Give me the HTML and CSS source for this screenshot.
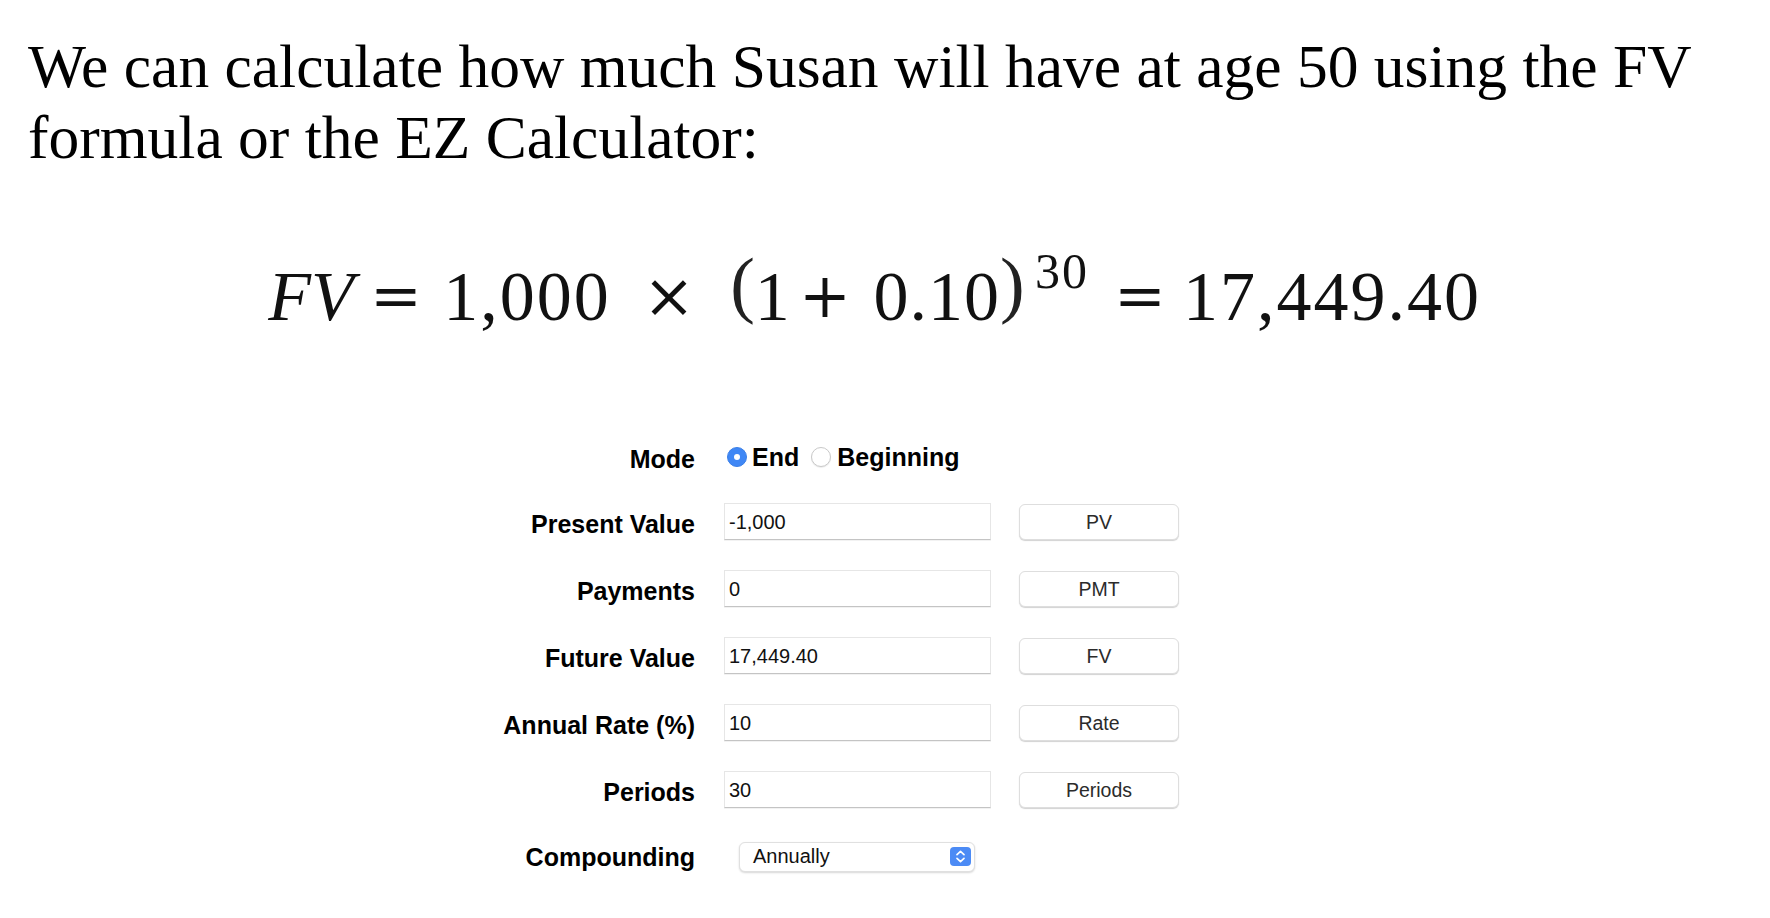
FILE: index.html
```html
<!DOCTYPE html>
<html lang="en">
<head>
<meta charset="utf-8">
<title>FV calculation</title>
<link rel="stylesheet" href="styles.css">
</head>
<body>
<p class="intro">We can calculate how much Susan will have at age 50 using the FV formula or the EZ Calculator:</p>

<div class="formula"><span class="term var"><span>FV</span></span><span class="term op eq1"><span>=</span></span><span class="term num n1"><span>1,000</span></span><span class="term op times"><span>×</span></span><span class="term open"><span><span class="paren">(</span><span class="num">1</span></span></span><span class="term op plus"><span>+</span></span><span class="term close"><span><span class="num tight">0.10</span><span class="paren">)</span></span></span><span class="term sup"><span>30</span></span><span class="term op eq2"><span>=</span></span><span class="term num result"><span>17,449.40</span></span></div>

<div class="calc">
  <div class="label mode">Mode</div>
  <div class="radios mode">
    <span class="radio on"></span><span class="rlabel">End</span>
    <span class="radio off"></span><span class="rlabel">Beginning</span>
  </div>

  <div class="label">Present Value</div>
  <input class="field" type="text" value="-1,000">
  <button class="btn" type="button">PV</button>

  <div class="label">Payments</div>
  <input class="field" type="text" value="0">
  <button class="btn" type="button">PMT</button>

  <div class="label">Future Value</div>
  <input class="field" type="text" value="17,449.40">
  <button class="btn" type="button">FV</button>

  <div class="label">Annual Rate (%)</div>
  <input class="field" type="text" value="10">
  <button class="btn" type="button">Rate</button>

  <div class="label">Periods</div>
  <input class="field" type="text" value="30">
  <button class="btn" type="button">Periods</button>

  <div class="label comp">Compounding</div>
  <div class="select">
    <span class="select-text">Annually</span>
    <svg class="stepper" width="21" height="19" viewBox="0 0 21 19" aria-hidden="true">
      <rect x="0" y="0" width="21" height="19" rx="4" fill="#4c8bf5"/>
      <path d="M7 7.6 L10.5 4.4 L14 7.6" fill="none" stroke="#fff" stroke-width="1.7" stroke-linecap="round" stroke-linejoin="round"/>
      <path d="M7 11.4 L10.5 14.6 L14 11.4" fill="none" stroke="#fff" stroke-width="1.7" stroke-linecap="round" stroke-linejoin="round"/>
    </svg>
  </div>
</div>
</body>
</html>
```

FILE: styles.css
```css
html, body {
  margin: 0;
  padding: 0;
  background: #ffffff;
  color: #000000;
}

.intro {
  margin: 31px 0 0 0;
  padding-left: 28px;
  font-family: "Liberation Serif", "Times New Roman", serif;
  font-size: 61.5px;
  line-height: 71px;
}

/* Each term is a zero-width box centred on its own position along the line */
.formula {
  margin-top: 73px;
  padding-left: 311px;
  height: 100px;
  line-height: 100px;
  white-space: nowrap;
  font-family: "Liberation Serif", "Times New Roman", serif;
  font-size: 70px;
  color: #111;
}

.term {
  display: inline-flex;
  justify-content: center;
  width: 0;
  line-height: 1;
}

.term > span {
  display: block;
  flex: none;
}

.var {
  font-style: italic;
}

.num {
  letter-spacing: 2px;
}

.num.tight {
  letter-spacing: 1px;
}

.op {
  font-family: "DejaVu Serif", "Liberation Serif", serif;
  font-size: 62px;
  vertical-align: 3px;
}

.eq1 { margin-left: 85px; }
.n1 { margin-left: 131px; }
.times { margin-left: 142px; }
.open { margin-left: 92px; }
.plus { margin-left: 64px; }
.close { margin-left: 124px; }
.sup { margin-left: 113px; }
.eq2 { margin-left: 78px; }
.result { margin-left: 192px; }

.paren {
  font-size: 74px;
  letter-spacing: 0;
  vertical-align: 11px;
  color: #222;
}

.formula .sup {
  font-size: 50px;
  letter-spacing: 2px;
  vertical-align: 32px;
}

.calc {
  display: grid;
  grid-template-columns: 695px 267px 160px;
  column-gap: 29px;
  grid-auto-rows: 67px;
  align-items: center;
  margin-top: 75px;
  font-family: "Liberation Sans", Arial, Helvetica, sans-serif;
}

.label {
  text-align: right;
  font-weight: bold;
  font-size: 25px;
  line-height: 30px;
  padding-top: 4px;
}

.mode {
  margin-top: 5px;
}

.label.comp {
  padding-top: 0;
}

.radios {
  grid-column: 2 / 4;
  display: flex;
  align-items: center;
  padding-left: 3px;
  font-weight: bold;
  font-size: 25px;
  line-height: 30px;
}

.radio {
  width: 20px;
  height: 20px;
  border-radius: 50%;
  box-sizing: border-box;
  flex: none;
}

.radio.on {
  background: #3f87f5;
  border: 1px solid #3a7fe8;
  position: relative;
}

.radio.on::after {
  content: "";
  position: absolute;
  left: 6px;
  top: 6px;
  width: 6px;
  height: 6px;
  border-radius: 50%;
  background: #fff;
}

.radio.off {
  background: #fff;
  border: 1px solid #c9c9c9;
  box-shadow: 0 1px 1px rgba(0, 0, 0, 0.08);
  margin-left: 12px;
}

.rlabel {
  margin-left: 5px;
}

.radio.off + .rlabel {
  margin-left: 6px;
}

.field {
  box-sizing: border-box;
  width: 267px;
  height: 37px;
  margin: 0;
  padding: 2px 4px 0 4px;
  border: 1px solid #e6e6e6;
  border-bottom: 1px solid #c4c4c4;
  border-radius: 0;
  box-shadow: 0 1px 0 rgba(0, 0, 0, 0.05);
  background: #fff;
  font-family: "Liberation Sans", Arial, Helvetica, sans-serif;
  font-size: 20px;
  color: #111;
  outline: none;
}

.btn {
  box-sizing: border-box;
  width: 160px;
  height: 36px;
  margin: 1px 0 0 -1px;
  padding: 0;
  border: 1px solid #dedede;
  border-radius: 6px;
  background: #fff;
  box-shadow: 0 1px 1px rgba(0, 0, 0, 0.18);
  font-family: "Liberation Sans", Arial, Helvetica, sans-serif;
  font-size: 19.5px;
  color: #2b2b2b;
}

.select {
  grid-column: 2 / 3;
  box-sizing: border-box;
  width: 236px;
  height: 30px;
  margin-left: 15px;
  display: flex;
  align-items: center;
  justify-content: space-between;
  padding: 0 3px 0 13px;
  border: 1px solid #e0e0e0;
  border-radius: 6px;
  background: #fff;
  box-shadow: 0 1px 2px rgba(0, 0, 0, 0.16);
  font-size: 20px;
  color: #111;
}

.stepper {
  display: block;
  flex: none;
}
```
